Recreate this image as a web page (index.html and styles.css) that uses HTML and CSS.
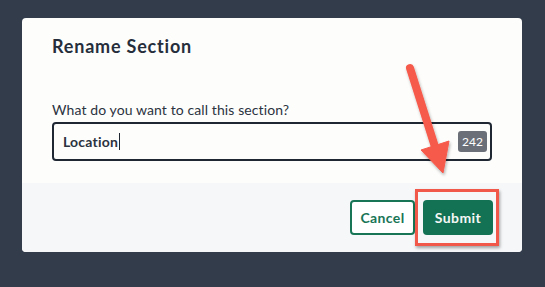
FILE: index.html
```html
<!DOCTYPE html>
<html lang="en">

<head>
  <meta charset="UTF-8">
  <meta name="viewport" content="width=device-width, initial-scale=1.0">
  <link rel="stylesheet" href="styles.css">
  <title>Rename Section</title>
</head>

<body>
  <div class="modal">
    <div class="modal-body">
      <h2 class="title">Rename Section</h2>
      <label class="label" for="name">What do you want to call this section?</label>
      <div class="field">
        <span class="value">Location<span class="caret"></span></span>
        <span class="count">242</span>
      </div>
    </div>
    <div class="modal-foot">
      <button class="btn btn-cancel">Cancel</button>
      <button class="btn btn-submit">Submit</button>
    </div>
  </div>

  <!-- annotation: arrow + box around submit -->
  <div class="highlight"></div>
  <svg class="arrow" width="545" height="287" viewBox="0 0 545 287">
    <defs>
      <filter id="shadow" x="-20%" y="-20%" width="140%" height="140%">
        <feDropShadow dx="1" dy="2" stdDeviation="1.5" flood-color="#000" flood-opacity="0.3"/>
      </filter>
    </defs>
    <g filter="url(#shadow)" fill="#f65a4b" stroke="#f65a4b">
      <line x1="410" y1="68" x2="436" y2="150" stroke-width="8" stroke-linecap="round"/>
      <polygon points="443,173 421,150 449,141" stroke-width="1" stroke-linejoin="round"/>
    </g>
  </svg>
</body>

</html>
```

FILE: styles.css
```css
body {
  margin: 0;
  height: 287px;
  background-color: #323c4b;
  font-family: 'Lato', 'Noto Sans', sans-serif;
  color: #2b3340;
  overflow: hidden;
}

.modal {
  margin: 18px 0 0 22px;
  width: 500px;
  height: 234px;
  background-color: #fdfdfc;
  border-radius: 4px;
  overflow: hidden;
  display: flex;
  flex-direction: column;
}

.modal-body {
  height: 165px;
  padding: 0 30px;
  box-sizing: border-box;
}

.title {
  margin: 0;
  padding-top: 16px;
  font-size: 18px;
  line-height: 24px;
  font-weight: 700;
  letter-spacing: 0.8px;
  color: #262e3b;
}

.label {
  display: block;
  margin-top: 42px;
  font-size: 14px;
  line-height: 20px;
  letter-spacing: 0.1px;
  color: #2b3340;
}

.field {
  margin-top: 2px;
  height: 39px;
  box-sizing: border-box;
  border: 2px solid #1f2733;
  border-radius: 4px;
  display: flex;
  align-items: center;
  justify-content: space-between;
  padding: 0 3px 0 9px;
}

.value {
  font-size: 14px;
  font-weight: 700;
  letter-spacing: 0.2px;
  color: #2b3340;
  display: flex;
  align-items: center;
}

.caret {
  display: inline-block;
  width: 1px;
  height: 17px;
  background-color: #1f2733;
  margin-left: 1px;
}

.count {
  background-color: #6b6f78;
  color: #fff;
  font-size: 12px;
  line-height: 21px;
  padding: 0 4px;
  border-radius: 3px;
}

.modal-foot {
  flex: 1;
  background-color: #f6f7f9;
  display: flex;
  justify-content: flex-end;
  align-items: flex-start;
  gap: 8px;
  padding: 17px 29px 0 0;
}

.btn {
  height: 35px;
  box-sizing: border-box;
  border-radius: 4px;
  font-family: inherit;
  font-size: 14px;
  font-weight: 700;
  letter-spacing: 0.4px;
  cursor: pointer;
}

.btn-cancel {
  width: 65px;
  background-color: #fff;
  border: 2px solid #187556;
  color: #187556;
}

.btn-submit {
  width: 70px;
  background-color: #127253;
  border: none;
  color: #f4f7f5;
}

.highlight {
  position: absolute;
  left: 415px;
  top: 189px;
  width: 84px;
  height: 57px;
  box-sizing: border-box;
  border: 3px solid #f2584a;
  box-shadow: 1px 2px 3px rgba(0, 0, 0, 0.35);
}

.arrow {
  position: absolute;
  left: 0;
  top: 0;
  pointer-events: none;
}
```
